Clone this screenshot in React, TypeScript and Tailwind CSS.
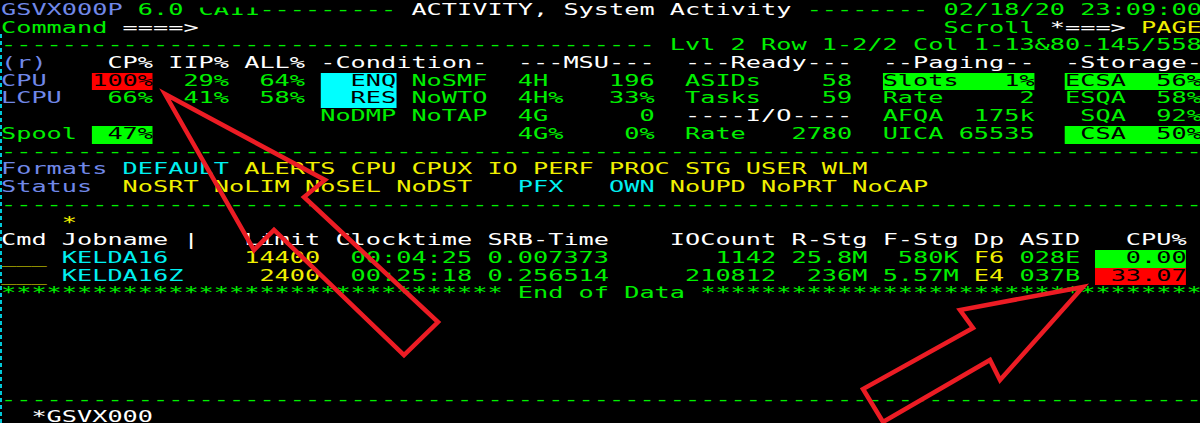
import React from "react";

// one terminal row = list of [column, text, classes]
type Seg = [number, string, string];

const B = "text-[#7088e8]";
const G = "text-[#00f000]";
const C = "text-[#00f0f0]";
const Y = "text-[#f0f000]";
const W = "text-white";
const RED = "inline-block bg-[#ff0000] text-black";
const GRN = "inline-block bg-[#00ff00] text-black";
const CYN = "inline-block bg-[#00ffff] text-black";

const dashes = "-".repeat(80);

const rows: Seg[][] = [
  [
    [0, "GSVX000P", B],
    [9, "6.0", G],
    [13, "CA11", G + " inline-block [clip-path:inset(32%_0_0_0)]"],
    [17, "---------", G],
    [27, "ACTIVITY, System Activity", W],
    [53, "--------", G],
    [62, "02/18/20 23:09:00", G],
  ],
  [
    [0, "Command", G],
    [8, "====>", W],
    [62, "Scroll", G],
    [69, "*===>", W],
    [75, "PAGE", Y],
  ],
  [
    [0, "-".repeat(43), G],
    [44, "Lvl 2 Row 1-2/2 Col 1-13&80-145/558", G],
  ],
  [
    [0, "(r)", B],
    [7, "CP%", W],
    [11, "IIP%", W],
    [16, "ALL%", W],
    [21, "-Condition-", W],
    [34, "---MSU---", W],
    [45, "---Ready---", W],
    [58, "--Paging--", W],
    [70, "-Storage-", W],
  ],
  [
    [0, "CPU", B],
    [6, "100%", RED],
    [12, "29%", G],
    [17, "64%", G],
    [21, "  ENQ", CYN],
    [27, "NoSMF", G],
    [34, "4H", G],
    [40, "196", G],
    [45, "ASIDs", G],
    [54, "58", G],
    [58, "Slots   1%", GRN],
    [70, "ECSA  56%", GRN],
  ],
  [
    [0, "LCPU", B],
    [7, "66%", G],
    [12, "41%", G],
    [17, "58%", G],
    [21, "  RES", CYN],
    [27, "NoWTO", G],
    [34, "4H%", G],
    [40, "33%", G],
    [45, "Tasks", G],
    [54, "59", G],
    [58, "Rate", G],
    [67, "2", G],
    [70, "ESQA", G],
    [76, "58%", G],
  ],
  [
    [21, "NoDMP", G],
    [27, "NoTAP", G],
    [34, "4G", G],
    [42, "0", G],
    [45, "----I/O----", W],
    [58, "AFQA", G],
    [64, "175k", G],
    [71, "SQA", G],
    [76, "92%", G],
  ],
  [
    [0, "Spool", G],
    [6, " 47%", GRN],
    [34, "4G%", G],
    [41, "0%", G],
    [45, "Rate", G],
    [52, "2780", G],
    [58, "UICA", G],
    [63, "65535", G],
    [70, " CSA  50%", GRN],
  ],
  [[0, dashes, G]],
  [
    [0, "Formats", B],
    [8, "DEFAULT", C],
    [16, "ALERTS CPU CPUX IO PERF PROC STG USER WLM", Y],
  ],
  [
    [0, "Status", B],
    [8, "NoSRT NoLIM NoSEL NoDST", Y],
    [34, "PFX", C],
    [40, "OWN", C],
    [44, "NoUPD NoPRT NoCAP", Y],
  ],
  [[0, dashes, G]],
  [[4, "*", Y]],
  [
    [0, "Cmd", W],
    [4, "Jobname", W],
    [12, "|", W],
    [16, "Limit", W],
    [22, "Clocktime", W],
    [32, "SRB-Time", W],
    [44, "IOCount", W],
    [52, "R-Stg", W],
    [58, "F-Stg", W],
    [64, "Dp", W],
    [67, "ASID", W],
    [74, "CPU%", W],
  ],
  [
    [0, "___", Y],
    [4, "KELDA16", C],
    [16, "14400", Y],
    [23, "00:04:25", G],
    [32, "0.007373", G],
    [47, "1142", G],
    [52, "25.8M", G],
    [59, "580K", G],
    [64, "F6", Y],
    [67, "028E", G],
    [72, "  0.00", GRN],
  ],
  [
    [0, "___", Y],
    [4, "KELDA16Z", C],
    [17, "2400", Y],
    [23, "00:25:18", G],
    [32, "0.256514", G],
    [45, "210812", G],
    [53, "236M", G],
    [58, "5.57M", G],
    [64, "E4", Y],
    [67, "037B", G],
    [72, " 33.07", RED],
  ],
  [
    [0, "*".repeat(33), G],
    [34, "End of Data", G],
    [46, "*".repeat(34), G],
  ],
  [],
  [],
  [],
  [],
  [],
  [[0, dashes, G]],
  [[2, "*GSVX000", W]],
];

function Row({ segs }: { segs: Seg[] }) {
  const out: React.ReactNode[] = [];
  let col = 0;
  segs.forEach(([at, text, cls], i) => {
    if (at > col) out.push(" ".repeat(at - col));
    out.push(
      <span key={i} className={cls}>
        {text}
      </span>
    );
    col = at + text.length;
  });
  return <div className="h-[17.72px] whitespace-pre">{out}</div>;
}

const App = () => {
  return (
    <div className="relative w-[1200px] h-[423px] overflow-hidden bg-black pl-[1.3px] pt-[1.9px] font-['DejaVu_Sans_Mono',monospace]">
      {/* 3270 screen, stretched to the emulator's wide cells */}
      <div className="w-[722.5px] origin-top-left scale-x-[1.6831] text-[15px] leading-[17.72px]">
        {rows.map((segs, i) => (
          <Row key={i} segs={segs} />
        ))}
      </div>

      {/* cursor column ruler */}
      <div className="absolute left-0 top-[34px] bottom-0 w-[2px] bg-[repeating-linear-gradient(to_bottom,#00c8d8_0px,#00c8d8_4px,transparent_4px,transparent_7px)]"></div>

      {/* red annotation arrows */}
      <svg
        className="absolute inset-0 pointer-events-none"
        width="1200"
        height="423"
        viewBox="0 0 1200 423"
      >
        <polygon
          points="165,94 325,180 304,197 438,322 404,355 274,230 254,250"
          fill="none"
          stroke="#ec1c24"
          strokeWidth="4.5"
        />
        <polygon
          points="1083,287 960,310 973,328 863,389 883,422 990,360 1000,380"
          fill="none"
          stroke="#ec1c24"
          strokeWidth="4.5"
        />
      </svg>
    </div>
  );
};

export default App;
